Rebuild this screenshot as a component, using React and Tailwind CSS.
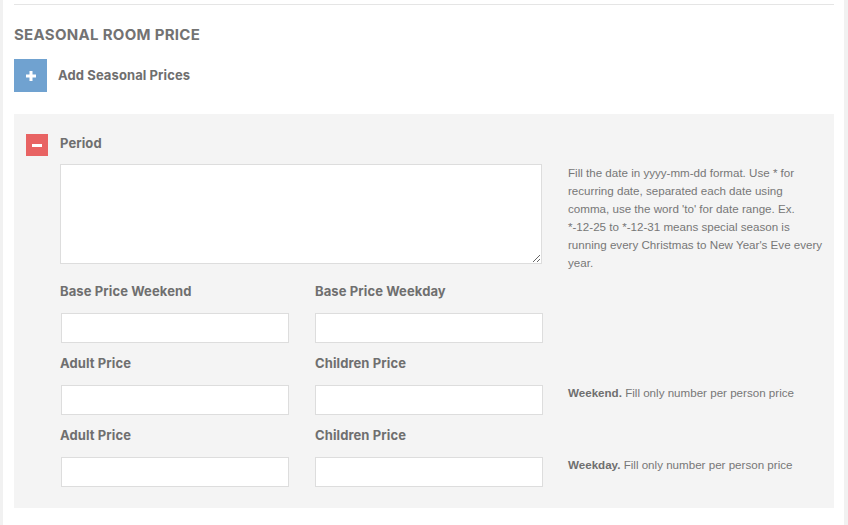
export default function App() {
  const head = { fontFamily: "Inter, 'Open Sans', sans-serif" };
  const body = { fontFamily: "'Liberation Sans', Arial, sans-serif" };
  const Label = ({ children }) => (
    <div className="h-[18px] leading-[18px] text-[13px] font-bold text-[#6f6f6f] tracking-[0.1px]" style={head}>
      {children}
    </div>
  );
  const Field = ({ label, first }) => (
    <div className="w-[255px]">
      <Label>{label}</Label>
      <input
        type="text"
        className={
          first
            ? "block mt-[13px] ml-px w-[228px] h-[30px] bg-white border border-[#dddddd] outline-none"
            : "block mt-[13px] w-[228px] h-[30px] bg-white border border-[#dddddd] outline-none"
        }
      />
    </div>
  );
  return (
    <div className="w-[848px] h-[525px] bg-[#f1f1f1] flex">
      <div className="ml-[3px] w-[841px] h-full bg-white pl-[11px] pr-[10px] pt-[4px]">
        <div className="border-t border-[#e5e5e5]" />
        <div
          className="mt-[21px] h-[18px] leading-[18px] text-[15px] font-bold text-[#737373] tracking-[0.3px]"
          style={head}
        >
          SEASONAL ROOM PRICE
        </div>
        <div className="mt-[15px] flex items-center">
          <div className="w-[33px] h-[33px] bg-[#70a2d0] flex items-center justify-center">
            <svg width="10" height="10" viewBox="0 0 10 10">
              <rect x="3.5" y="0" width="3" height="10" fill="#fff" />
              <rect x="0" y="3.5" width="10" height="3" fill="#fff" />
            </svg>
          </div>
          <div className="ml-[11px] text-[13px] font-bold text-[#6f6f6f] tracking-[0.1px]" style={head}>
            Add Seasonal Prices
          </div>
        </div>
        <div className="mt-[22px] bg-[#f4f4f4] pl-[12px] pt-[20px] pb-[21px] h-[394px]">
          <div className="flex items-center">
            <div className="w-[22px] h-[22px] bg-[#e86363] flex items-center justify-center">
              <svg width="10" height="3" viewBox="0 0 10 3">
                <rect x="0" y="0" width="10" height="3" fill="#fff" />
              </svg>
            </div>
            <div className="ml-[12px] -mt-[3px] text-[13px] font-bold text-[#6f6f6f] tracking-[0.1px]" style={head}>
              Period
            </div>
          </div>
          <div className="ml-[34px]">
            <div className="flex items-start h-[100px] mt-[8px]">
              <textarea className="block w-[482px] h-[100px] bg-white border border-[#dddddd] outline-none resize-y" />
              <div
                className="ml-[26px] w-[264px] whitespace-nowrap text-[11.6px] leading-[18px] text-[#777777]"
                style={body}
              >
                Fill the date in yyyy-mm-dd format. Use * for
                <br />
                recurring date, separated each date using
                <br />
                comma, use the word 'to' for date range. Ex.
                <br />
                *-12-25 to *-12-31 means special season is
                <br />
                running every Christmas to New Year's Eve every
                <br />
                year.
              </div>
            </div>
            <div className="flex mt-[18px]">
              <Field label="Base Price Weekend" first />
              <Field label="Base Price Weekday" />
            </div>
            <div className="flex mt-[11px]">
              <Field label="Adult Price" first />
              <Field label="Children Price" />
              <div className="pt-[30px] ml-[-2px] text-[11.6px] leading-[18px] text-[#777777]" style={body}>
                <span className="font-bold text-[#6f6f6f]">Weekend.</span> Fill only number per person price
              </div>
            </div>
            <div className="flex mt-[11px]">
              <Field label="Adult Price" first />
              <Field label="Children Price" />
              <div className="pt-[30px] ml-[-2px] text-[11.6px] leading-[18px] text-[#777777]" style={body}>
                <span className="font-bold text-[#6f6f6f]">Weekday.</span> Fill only number per person price
              </div>
            </div>
          </div>
        </div>
      </div>
    </div>
  );
}
